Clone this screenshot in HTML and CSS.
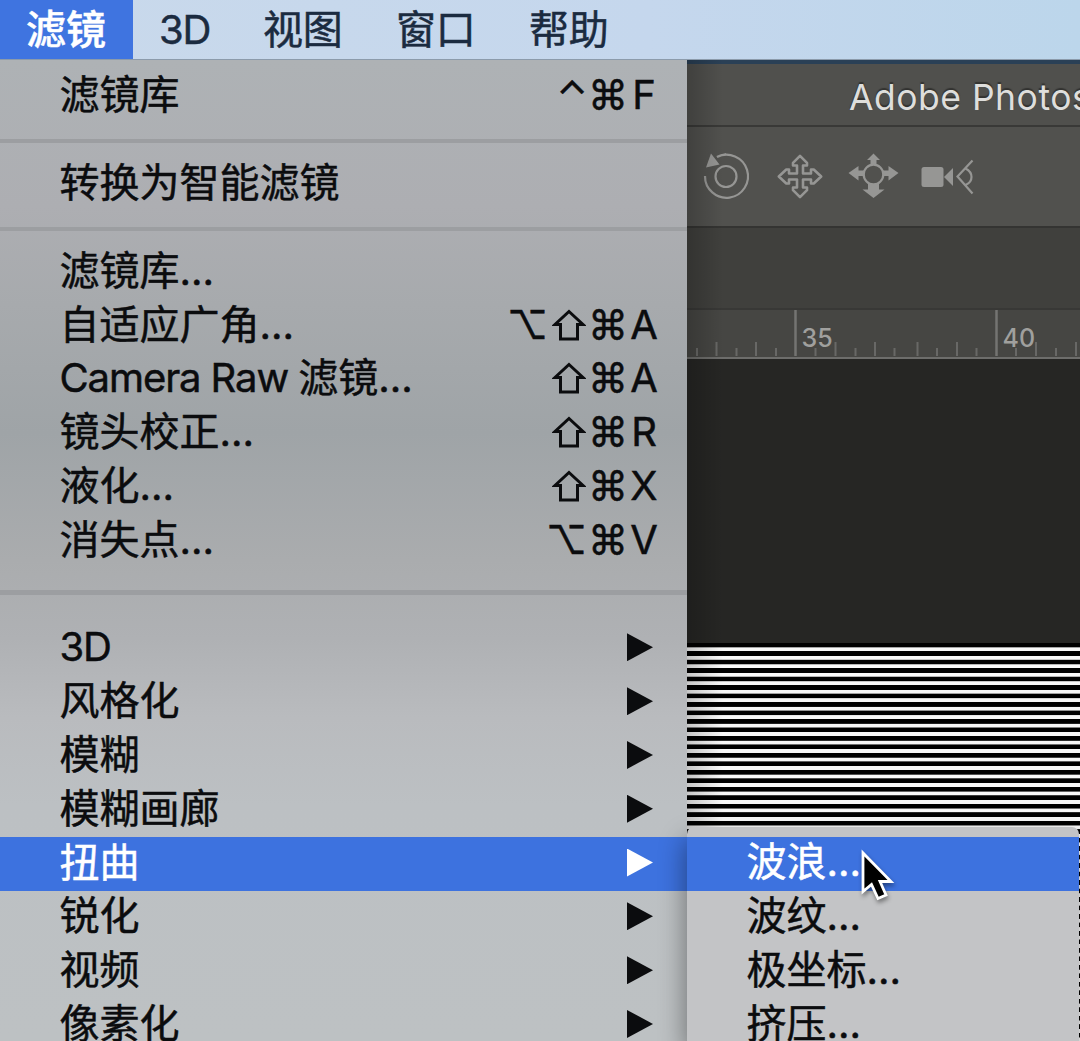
FILE: index.html
```
<!DOCTYPE html>
<html lang="zh-CN">
	<head>
		<meta charset="UTF-8" />
		<meta name="viewport" content="width=device-width, initial-scale=1.0" />
		<title>Adobe Photoshop</title>
		<link rel="stylesheet" href="styles.css">
	</head>
	<body>
		<svg width="0" height="0" class="defs">
			<symbol id="shift" viewBox="0 0 34 32">
				<path d="M17 2.500L31 15.500h-5.500v14.500h-17v-14.500h-5.500z" fill="none" stroke="#0b0c0e" stroke-width="3" />
			</symbol>
		</svg>
		<nav class="menubar">
			<span class="menubar-item active">滤镜</span>
			<span class="menubar-item latin">3D</span>
			<span class="menubar-item">视图</span>
			<span class="menubar-item">窗口</span>
			<span class="menubar-item">帮助</span>
		</nav>
		<div class="desktop">
			<div class="menu">
				<div class="row"><span>滤镜库</span><span class="keys"><i class="ctrl">⌃</i><i>⌘</i><b>F</b></span></div>
				<hr />
				<div class="row convert"><span>转换为智能滤镜</span></div>
				<hr />
				<div class="row"><span>滤镜库...</span></div>
				<div class="row"><span>自适应广角...</span><span class="keys"><i class="opt">⌥</i><i><svg width="34" height="32"><use href="#shift" /></svg></i><i>⌘</i><b>A</b></span></div>
				<div class="row"><span><span class="latin">Camera Raw </span>滤镜...</span><span class="keys"><i><svg width="34" height="32"><use href="#shift" /></svg></i><i>⌘</i><b>A</b></span></div>
				<div class="row"><span>镜头校正...</span><span class="keys"><i><svg width="34" height="32"><use href="#shift" /></svg></i><i>⌘</i><b>R</b></span></div>
				<div class="row"><span>液化...</span><span class="keys"><i><svg width="34" height="32"><use href="#shift" /></svg></i><i>⌘</i><b>X</b></span></div>
				<div class="row"><span>消失点...</span><span class="keys"><i class="opt">⌥</i><i>⌘</i><b>V</b></span></div>
				<hr class="wide" />
				<div class="row"><span class="latin">3D</span><span class="arrow"></span></div>
				<div class="row"><span>风格化</span><span class="arrow"></span></div>
				<div class="row"><span>模糊</span><span class="arrow"></span></div>
				<div class="row"><span>模糊画廊</span><span class="arrow"></span></div>
				<div class="row selected"><span>扭曲</span><span class="arrow"></span></div>
				<div class="row"><span>锐化</span><span class="arrow"></span></div>
				<div class="row"><span>视频</span><span class="arrow"></span></div>
				<div class="row"><span>像素化</span><span class="arrow"></span></div>
			</div>
			<div class="app">
				<div class="titlebar">Adobe Photoshop</div>
				<div class="toolbar">
					<svg width="393" height="99" viewBox="687 127 393 99" fill="none" stroke="#969694" stroke-width="2.200">
						<!-- orbit -->
						<circle cx="726" cy="176.500" r="10.500" />
						<path d="M705 176a21.500 21.500 0 1 0 12-19q3.500-2.500 9-2.500" />
						<path d="M711 153.500l8.500 11-13.500 3z" fill="#969694" stroke="none" />
						<!-- pan -->
						<path d="M800 155.800l7 7v2.700h-4v8h8v-4h2.700l7.500 7-7.500 7h-2.700v-4h-8v8h4v2.700l-7 7-7-7v-2.700h4v-8h-8v4h-2.700l-7.500-7 7.500-7h2.700v4h8v-8h-4v-2.700z" stroke-width="2.600" stroke-linejoin="round" />
						<!-- slide -->
						<circle cx="873.500" cy="174.500" r="9.800" />
						<path d="M873.500 153.500l6.500 6.500h-3.500v5h-6v-5h-3.500zM848.500 173l10-7v4.500h6v5.500h-6v4.500zM898.500 173l-10-7v4.500h-6v5.500h6v4.500zM873.500 198l-11-8.500h5.500v-5.500h11v5.500h5.500z" fill="#969694" stroke="none" />
						<!-- camera -->
						<rect x="921.500" y="167" width="22" height="20" rx="2.500" fill="#969694" stroke="none" />
						<path d="M944 177l9-9v18z" fill="#969694" stroke="none" />
						<path d="M972.500 160.500l-15 16 15 17M965.500 168.500q6 3 6 8.500t-6 8" />
					</svg>
				</div>
				<div class="tabs"></div>
				<div class="ruler">
					<svg width="393" height="46" viewBox="687 310 393 46">
						<path d="M795.500 310v46M996.500 310v46" stroke="#747472" stroke-width="2.500" />
						<path d="M716.500 342v14M756 342v14M835.500 342v14M875 342v14M917.500 342v14M957 342v14M1036 342v14M1076 342v14M697 348v8M736.500 348v8M776 348v8M815.500 348v8M855.500 348v8M894.500 348v8M937 348v8M976.500 348v8M1016 348v8M1056 348v8" stroke="#686866" stroke-width="2" />
						<text x="801.500" y="346.500">35</text>
						<text x="1002.500" y="346.500">40</text>
					</svg>
				</div>
				<div class="workspace">
					<div class="canvas"></div>
				</div>
			</div>
			<div class="submenu">
				<div class="row selected">波浪...</div>
				<div class="row">波纹...</div>
				<div class="row">极坐标...</div>
				<div class="row">挤压...</div>
			</div>
			<svg class="cursor" width="36" height="56" viewBox="0 0 36 56">
				<path d="M3 4v38.500l8.500-7 6.500 14 8-3.500-6-13.500h11z" fill="#000" stroke="#fff" stroke-width="2.800" />
			</svg>
		</div>
	</body>
</html>
```
FILE: styles.css
```
body {
	margin: 0;
	width: 1080px;
	height: 1041px;
	overflow: hidden;
	position: relative;
	background: #262624;
	font-family: Inter, "Noto Sans CJK SC", sans-serif;
	font-size: 40px;
	color: #0b0c0e;
	-webkit-text-stroke: 0.5px currentColor;
}
svg {
	display: block;
}
.defs {
	position: absolute;
}
.menubar {
	display: flex;
	height: 60px;
	box-sizing: border-box;
	border-bottom: 1px solid #8c9bab;
	background: linear-gradient(90deg, #c9d9eb, #c5d7ed 60%, #bcd6eb);
	color: #1b2b40;
}
.menubar-item {
	padding: 0 26.5px;
	line-height: 60px;
	font-size: 40px;
}
.menubar-item.active {
	width: 80px;
	padding: 0 27px 0 26px;
	background: #3f74e0;
	color: #fff;
	font-weight: 500;
}
.latin {
	letter-spacing: -1.1px;
}
.menubar .latin {
	padding: 0 26px;
}
.desktop {
	display: flex;
	height: 981px;
}
.menu {
	width: 687px;
	height: 981px;
	box-sizing: border-box;
	padding-top: 8.6px;
	overflow: hidden;
	background: linear-gradient(#aeb2b5, #adaeb2 15%, #a7aaad 25%, #9fa4a7 38%, #aaacae 51%, #afb1b4 59%, #b9bbbe 67%, #bcc0c3 76%, #bdc1c3);
}
.row {
	display: flex;
	justify-content: space-between;
	align-items: center;
	height: 53.8px;
	padding: 0 34px 1px 59.5px;
	box-sizing: border-box;
	line-height: 52px;
	white-space: nowrap;
}
.row.convert {
	padding-bottom: 0;
}
hr.wide ~ .row,
.submenu .row {
	padding-bottom: 3px;
}
.row.selected {
	background: #3d72df;
	color: #fff;
}
hr {
	height: 4.5px;
	margin: 16.6px 0 13px;
	border: 0;
	background: #9c9ea1;
}
hr.wide {
	margin: 23px 0 27.3px;
}
.keys {
	display: flex;
	align-items: center;
	margin-right: -8px;
}
.keys i,
.keys b {
	width: 39px;
	text-align: center;
	font-style: normal;
	font-weight: 400;
}
.keys b {
	width: 34px;
}
.keys .opt {
	width: 43px;
}
.keys .ctrl {
	width: 32px;
}
.keys svg {
	margin: 0 auto;
}
.arrow {
	width: 26px;
	height: 28px;
	background: currentColor;
	clip-path: polygon(0 0, 100% 50%, 0 100%);
}
.app {
	width: 393px;
	position: relative;
	color: #dededc;
}
.app::after {
	content: "";
	position: absolute;
	inset: 0 auto 0 0;
	width: 36px;
	background: linear-gradient(90deg, rgba(0, 0, 0, 0.2), transparent);
}
.titlebar {
	height: 67px;
	box-sizing: border-box;
	border-top: 4px solid #2a4056;
	border-bottom: 2px solid #393937;
	padding-left: 162px;
	overflow: hidden;
	background: #50504d;
	font-size: 35.5px;
	line-height: 68px;
	letter-spacing: 0.5px;
	white-space: nowrap;
	text-shadow: 0 -2px 1px #333331;
	-webkit-text-stroke: 0;
}
.toolbar {
	height: 101px;
	box-sizing: border-box;
	border-bottom: 2px solid #343432;
	background: #51514e;
}
.tabs {
	height: 82px;
	box-sizing: border-box;
	border-bottom: 2px solid #383836;
	background: #40403d;
}
.ruler {
	height: 48.5px;
	box-sizing: border-box;
	border-bottom: 2.5px solid #6d6d6b;
	background: #464643;
	-webkit-text-stroke: 0;
}
.ruler text {
	font-size: 25px;
	font-weight: 500;
	fill: #a0a09e;
}
.workspace {
	padding-top: 284.5px;
	background: #262624;
}
.canvas {
	height: 398px;
	background: repeating-linear-gradient(#000 0, #000 4.1px, #f8f8f8 4.7px, #f8f8f8 7.9px, #000 8.48px);
}
.submenu {
	position: absolute;
	left: 687px;
	top: 827px;
	width: 392px;
	height: 214px;
	box-sizing: border-box;
	padding-top: 10px;
	overflow: hidden;
	border-radius: 7px 7px 0 0;
	background: #c3c4c6;
	box-shadow: -2px 12px 26px rgba(0, 0, 0, 0.4);
}
.cursor {
	position: absolute;
	left: 860px;
	top: 849px;
	filter: drop-shadow(1px 3px 2px rgba(0, 0, 0, 0.4));
}
```
